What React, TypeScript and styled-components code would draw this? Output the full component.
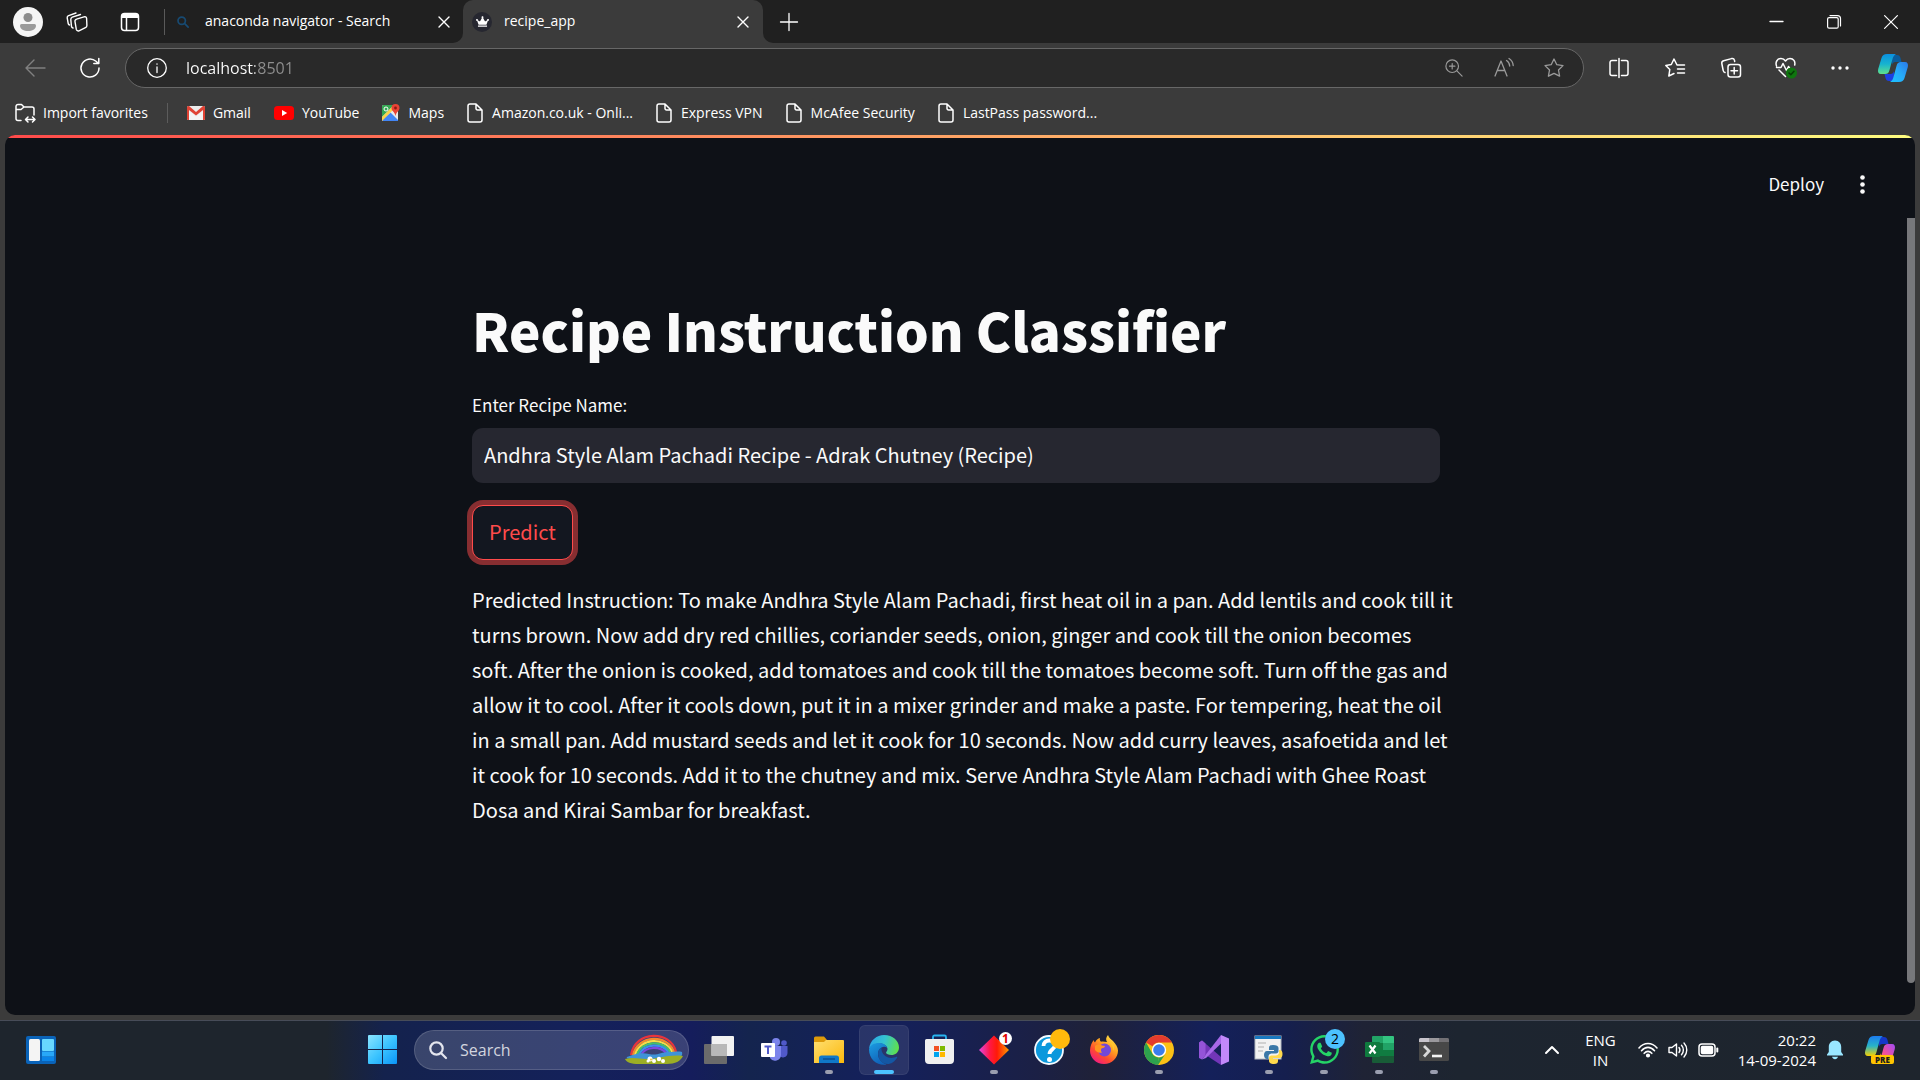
import React from "react";
import styled, { createGlobalStyle } from "styled-components";
import { FaWhatsapp, FaCrown } from "react-icons/fa";

const uiFont = `"Open Sans", "Noto Sans", sans-serif`;
const appFont = `"Noto Sans CJK JP", "Noto Sans", sans-serif`;

const GlobalStyle = createGlobalStyle`
  * { box-sizing: border-box; }
  body { margin: 0; background: #3b3b3b; }
  button, input { font: inherit; color: inherit; border: 0; background: none; padding: 0; margin: 0; outline: none; }
`;

const Screen = styled.div`
  display: flex;
  flex-direction: column;
  min-height: 100vh;
  background: #3b3b3b;
  color: #fff;
  font-family: ${uiFont};
  font-size: 14px;
  line-height: 20px;
`;

const Svg = styled.svg`
  display: block;
  flex: none;
  overflow: visible;
`;

/* Tab strip */

const TabStrip = styled.header`
  display: flex;
  height: 43px;
`;

const StripStart = styled.div`
  display: flex;
  align-items: center;
  width: 463px;
  padding: 0 10px 0 12px;
  background: #202020;
  border-bottom-right-radius: 10px;
`;

const StripEnd = styled.div`
  display: flex;
  flex: 1;
  align-items: center;
  justify-content: space-between;
  background: #202020;
  border-bottom-left-radius: 10px;
`;

const IconButton = styled.button<{ $w?: number }>`
  display: flex;
  flex: none;
  align-items: center;
  justify-content: center;
  width: ${(p) => p.$w ?? 32}px;
  height: 34px;
`;

const StripDivider = styled.span`
  width: 1px;
  height: 26px;
  margin: 0 8px 0 14px;
  background: #5a5a5a;
`;

const Tab = styled.div`
  display: flex;
  flex: 1;
  align-items: center;
  gap: 12px;
`;

const TabTitle = styled.span`
  flex: 1;
  padding-bottom: 2px;
  white-space: nowrap;
`;

const ActiveTabSlot = styled.div`
  width: 300px;
  background: #202020;
`;

const ActiveTab = styled(Tab)`
  height: 100%;
  padding: 0 4px 0 9px;
  background: #3b3b3b;
  border-radius: 10px 10px 0 0;
`;

const Favicon = styled.span<{ $dark?: boolean }>`
  display: flex;
  align-items: center;
  justify-content: center;
  width: 20px;
  height: 20px;
  border-radius: 50%;
  background: ${(p) => (p.$dark ? "#262730" : "transparent")};
`;

const WindowControls = styled.div`
  display: flex;
  padding-right: 1px;
`;

/* Toolbar */

const Toolbar = styled.div`
  display: flex;
  align-items: center;
  height: 49px;
  padding: 0 0 0 7px;
`;

const AddressBar = styled.div`
  display: flex;
  flex: 1;
  align-items: center;
  height: 40px;
  margin: 0 7px 0 7px;
  padding: 0 4px 0 21px;
  color: #9a9a9a;
  background: #292929;
  border: 1px solid #676767;
  border-radius: 20px;
`;

const AddressInput = styled.input`
  flex: 1;
  min-width: 0;
  margin-left: 19px;
  font-size: 16px;
  line-height: 24px;
  color: #fff;
  background: linear-gradient(90deg, #fff 69px, #8f8f8f 69px);
  background-clip: text;
  -webkit-background-clip: text;
  -webkit-text-fill-color: transparent;
`;

/* Favourites bar */

const Favourites = styled.nav`
  display: flex;
  align-items: center;
  height: 43px;
  padding: 0 15px 2px;
  gap: 23px;
`;

const FavLink = styled.a`
  display: flex;
  align-items: center;
  gap: 8px;
  color: #fff;
  text-decoration: none;
  white-space: nowrap;
`;

const FavDivider = styled.span`
  width: 1px;
  height: 20px;
  margin: 0 -4px;
  background: #5c5c5c;
`;

/* Page */

const PageFrame = styled.main`
  display: flex;
  flex: 1;
  flex-direction: column;
  margin: 0 5px 5px;
  overflow: hidden;
  background: #0e1117;
  border-radius: 10px;
  color: #fafafa;
  font-family: ${appFont};
`;

const Decoration = styled.div`
  height: 3px;
  background: linear-gradient(90deg, #ff4b4b, #fffd80);
`;

const AppHeader = styled.div`
  display: flex;
  align-items: center;
  justify-content: flex-end;
  gap: 16px;
  height: 80px;
  padding: 12px 31px 0 0;
`;

const DeployButton = styled.button`
  font-size: 17px;
  line-height: 24px;
`;

const ScrollRegion = styled.div`
  display: flex;
  flex: 1;
`;

const Content = styled.div`
  flex: 1;
  padding: 69px 0 32px;
`;

const Block = styled.div`
  width: 968px;
  max-width: 100%;
  margin: 0 auto;
`;

const Track = styled.div`
  width: 8px;
  margin-bottom: 32px;
  background: #77787b;
  border-radius: 0 0 4px 4px;
`;

const Heading = styled.h1`
  margin: 0;
  font-size: 53px;
  font-weight: 900;
  line-height: 84px;
  white-space: nowrap;
`;

const FieldLabel = styled.label`
  display: block;
  margin: 22px 0 11px;
  font-size: 17px;
  line-height: 24px;
`;

const RecipeInput = styled.input`
  display: block;
  width: 100%;
  height: 55px;
  padding: 0 12px 2px;
  font-size: 20px;
  line-height: 32px;
  background: #262730;
  border-radius: 11px;
`;

const PredictButton = styled.button`
  height: 55px;
  margin: 22px 0;
  padding: 0 16px 2px;
  font-size: 20px;
  line-height: 32px;
  color: #ff4b4b;
  background: #131720;
  border: 1px solid #ff4b4b;
  border-radius: 11px;
  box-shadow: 0 0 0 5px rgba(255, 75, 75, 0.5);
`;

const Prediction = styled.p`
  margin: 0;
  font-size: 20px;
  line-height: 35px;
  white-space: nowrap;
`;

/* Taskbar */

const Taskbar = styled.footer`
  display: flex;
  align-items: center;
  height: 60px;
  padding: 0 3px 2px 16px;
  border-top: 1px solid #474c58;
  background: linear-gradient(
    90deg,
    #1e252d 0%,
    #1e252d 17%,
    #14224d 20%,
    #14215a 30%,
    #151d5c 36%,
    #14244e 39%,
    #14205c 46%,
    #1b2045 54%,
    #1f2138 57%,
    #14205a 63%,
    #151f4e 67%,
    #1f2335 71%,
    #1d2530 76%,
    #1e252d 100%
  );
`;

const TaskGroup = styled.div`
  display: flex;
  align-items: center;
  gap: 5px;
  margin-left: 291px;
`;

const TaskButton = styled.button<{ $active?: boolean }>`
  position: relative;
  display: flex;
  align-items: center;
  justify-content: center;
  width: 50px;
  height: 50px;
  border-radius: 6px;
  background: ${(p) => (p.$active ? "rgba(255,255,255,0.09)" : "none")};
  box-shadow: ${(p) => (p.$active ? "inset 0 0 0 1px rgba(255,255,255,0.06)" : "none")};
`;

const Indicator = styled.span<{ $active?: boolean }>`
  position: absolute;
  bottom: 1px;
  left: 50%;
  width: ${(p) => (p.$active ? 20 : 8)}px;
  height: 4px;
  transform: translateX(-50%);
  background: ${(p) => (p.$active ? "#4cc2ff" : "#9a9eaf")};
  border-radius: 2px;
`;

const Badge = styled.span<{ $bg: string; $fg: string; $size: number }>`
  position: absolute;
  top: ${(p) => (p.$size > 16 ? 4 : 7)}px;
  right: ${(p) => (p.$size > 16 ? 4 : 7)}px;
  width: ${(p) => p.$size}px;
  height: ${(p) => p.$size}px;
  font-size: ${(p) => (p.$size > 16 ? 14 : 12)}px;
  font-weight: ${(p) => (p.$size > 16 ? 400 : 700)};
  line-height: ${(p) => p.$size}px;
  text-align: center;
  color: ${(p) => p.$fg};
  background: ${(p) => p.$bg};
  border-radius: 50%;
`;

const TaskSearch = styled.label`
  display: flex;
  align-items: center;
  width: 275px;
  height: 40px;
  margin: 0 0 0 2px;
  padding: 0 5px 0 14px;
  gap: 13px;
  background: rgba(255, 255, 255, 0.16);
  border: 1px solid rgba(255, 255, 255, 0.14);
  border-radius: 20px;
`;

const TaskSearchInput = styled.input`
  flex: 1;
  min-width: 0;
  font-size: 16px;
  line-height: 24px;
  &::placeholder { color: #d2d5df; opacity: 1; }
`;

const Tray = styled.div`
  display: flex;
  align-items: center;
  margin-left: auto;
`;

const TrayText = styled.button<{ $align: string; $gap: number }>`
  margin-right: ${(p) => p.$gap}px;
  text-align: ${(p) => p.$align};
  font-size: 15px;
  line-height: 20px;
`;

const TrayIcons = styled.button`
  display: flex;
  align-items: center;
  gap: 10px;
  margin-right: 20px;
`;

/* Drawings */

type LineProps = { w?: number; h?: number; vb?: string; c?: string; sw?: number; children: React.ReactNode };

const Line = ({ w = 20, h = 20, vb = "0 0 20 20", c = "currentColor", sw = 1.3, children }: LineProps) => (
  <Svg width={w} height={h} viewBox={vb} fill="none" stroke={c} strokeWidth={sw} strokeLinecap="round" strokeLinejoin="round" aria-hidden="true">
    {children}
  </Svg>
);

const Art = ({ w = 30, h = 30, vb = "0 0 30 30", children }: LineProps) => (
  <Svg width={w} height={h} viewBox={vb} aria-hidden="true">
    {children}
  </Svg>
);

const CloseGlyph = () => (
  <Line w={12} h={12} vb="0 0 12 12" sw={1.4}><path d="M1 1l10 10M11 1L1 11" /></Line>
);

const PageGlyph = () => (
  <Line w={17} h={20} vb="0 0 17 20" sw={1.5}>
    <path d="M3 1h6l6 6v10a2 2 0 0 1-2 2H3a2 2 0 0 1-2-2V3a2 2 0 0 1 2-2zM9 1v4.500a1.500 1.500 0 0 0 1.500 1.500H15" />
  </Line>
);

const Profile = () => (
  <Svg width={30} height={30} viewBox="0 0 30 30" aria-hidden="true">
    <circle cx="15" cy="15" r="15" fill="#f5f5f5" />
    <circle cx="15" cy="10.500" r="4.500" fill="#8c8c8c" />
    <path d="M8.500 17h13a1.500 1.500 0 0 1 1.500 1.500c0 4-4 5.500-8 5.500s-8-1.500-8-5.500A1.500 1.500 0 0 1 8.500 17z" fill="#9a9a9a" />
  </Svg>
);

const Workspaces = () => (
  <Line w={22} h={20} vb="0 0 22 20" sw={1.4}>
    <path d="M10.500 7.200l7.500-2.400a2 2 0 0 1 2.600 1.500l.3 7.200a2.400 2.400 0 0 1-1.500 2.200l-6.400 3.100a2 2 0 0 1-2.700-1.400L9 9.600a2 2 0 0 1 1.500-2.400z" />
    <path d="M7 16a2 2 0 0 1-1.500-1.500L4.800 7.500a2.400 2.400 0 0 1 1.500-2.300L14.500 2.500M3.500 13a2 2 0 0 1-1.300-1.500L1.200 5.800a2.200 2.200 0 0 1 1.400-2.200L10 1" />
  </Line>
);

const TabActions = () => (
  <Svg width={20} height={20} viewBox="0 0 20 20" fill="none" stroke="#fff" strokeWidth="1.500" aria-hidden="true">
    <rect x="1.500" y="1.500" width="17" height="17" rx="3" /><path d="M6.500 5v13" /><path d="M2 4h16" strokeWidth="4" />
  </Svg>
);

const CopilotMark = ({ pre }: { pre?: boolean }) => (
  <Art w={30} h={28} vb="0 0 30 28">
    <defs>
      <linearGradient id={pre ? "cpA" : "cqA"} x1="0" y1="0" x2="0" y2="1">
        <stop offset="0" stopColor={pre ? "#1c7cf0" : "#0b90e0"} /><stop offset=".5" stopColor={pre ? "#28b4c8" : "#17b3cf"} /><stop offset="1" stopColor={pre ? "#f5d000" : "#5fe08c"} />
      </linearGradient>
      <linearGradient id={pre ? "cpB" : "cqB"} x1="0" y1="1" x2="1" y2="0">
        <stop offset="0" stopColor={pre ? "#ff7a3c" : "#1cc4ff"} /><stop offset=".5" stopColor={pre ? "#f0509c" : "#27aaf8"} /><stop offset="1" stopColor={pre ? "#a04cf8" : "#2a78e8"} />
      </linearGradient>
    </defs>
    <path d="M13 1h6c2 0 3 1 3.500 3l1 4h-6c-2 0-3 1-3.500 3z" fill={pre ? "#1538c8" : "#0a5c9c"} />
    <path d="M17 27h-6c-2 0-3-1-3.500-3l-1-4h6c2 0 3-1 3.500-3z" fill={pre ? "#f08020" : "#1d40e0"} />
    <path d="M9 0h9c-2 1-3 3-3.500 5l-3 11c-.8 3-2 4-4.500 4H3c-2.500 0-3.500-2-2.800-5L3.500 4C4.300 1.300 6 0 9 0z" fill={`url(#${pre ? "cpA" : "cqA"})`} />
    <path d="M21 28h-9c2-1 3-3 3.500-5l3-11c.8-3 2-4 4.500-4h4c2.500 0 3.500 2 2.800 5L26.500 24c-.8 2.700-2.500 4-5.500 4z" fill={`url(#${pre ? "cpB" : "cqB"})`} />
    {pre && (
      <>
        <rect x="6" y="19" width="23" height="9" rx="2" fill="#ffc400" />
        <text x="17.500" y="26.500" fontFamily="Open Sans, sans-serif" fontSize="8" fontWeight="800" textAnchor="middle" fill="#1c1c1c">PRE</text>
      </>
    )}
  </Art>
);

const Gmail = () => (
  <Art w={18} h={14} vb="0 0 18 14">
    <rect width="18" height="14" rx="1.500" fill="#ececec" />
    <path d="M2 14V5l7 5.500L16 5v9z" fill="#f4f4f4" />
    <path d="M0 1.500C0 .6.7 0 1.500 0H2l7 6 7-6h.5c.8 0 1.500.6 1.500 1.500V13a1 1 0 0 1-1 1h-1V4L9 9.500 2 4v10H1a1 1 0 0 1-1-1z" fill="#e04335" />
  </Art>
);

const YouTube = () => (
  <Art w={20} h={14} vb="0 0 20 14">
    <rect width="20" height="14" rx="3.500" fill="#f00" /><path d="M8 4l5.200 3L8 10z" fill="#fff" />
  </Art>
);

const Maps = () => (
  <Art w={18} h={18} vb="0 0 18 18">
    <rect y="1" width="16" height="16" rx="1.500" fill="#e9e9e9" />
    <path d="M1.500 1H12L0 13V2.500A1.500 1.500 0 0 1 1.500 1z" fill="#34a853" />
    <path d="M8.500 8.500L16 16v1H1l-1-1z" fill="#4285f4" />
    <path d="M0 13L11 2l2 2L0 17z" fill="#fbd24a" />
    <circle cx="4" cy="5" r="2" fill="none" stroke="#fff" strokeWidth="1" />
    <path d="M13.500 0A4 4 0 0 1 17.500 4c0 3-3.200 3.500-4 8-.8-4.500-4-5-4-8a4 4 0 0 1 4-4z" fill="#ea4335" />
    <circle cx="13.500" cy="4" r="1.400" fill="#8c1a12" />
  </Art>
);

const WidgetsArt = () => (
  <Art w={30} h={28} vb="0 0 30 28">
    <rect width="30" height="28" rx="2" fill="#0a63b8" /><rect x="3" y="3" width="11" height="22" rx="1.500" fill="#f4f4f4" />
    <rect x="16" y="3" width="12" height="12" rx="1" fill="#68d8ff" /><rect x="16" y="15.500" width="12" height="5" fill="#28a8f8" /><rect x="16" y="21" width="12" height="4" fill="#0a84e8" />
  </Art>
);

const StartArt = () => (
  <Art w={29} h={29} vb="0 0 29 29">
    <defs><linearGradient id="win" x1="0" y1="0" x2="1" y2="1"><stop offset="0" stopColor="#8be4ff" /><stop offset=".5" stopColor="#3cc4ff" /><stop offset="1" stopColor="#0a94f8" /></linearGradient></defs>
    <path d="M0 1a1 1 0 0 1 1-1h13v14H0zM15 0h13a1 1 0 0 1 1 1v13H15zM0 15h14v14H1a1 1 0 0 1-1-1zM15 15h14v13a1 1 0 0 1-1 1H15z" fill="url(#win)" />
  </Art>
);

const Rainbow = () => (
  <Art w={58} h={30} vb="0 0 58 30">
    <g fill="none" strokeWidth="2.200">
      <path d="M6 20C10 -5 46 -5 51 17" stroke="#e8343c" /><path d="M8 20C13 -1 43 -1 49 17" stroke="#f58a2c" />
      <path d="M10 20C15 2 41 2 47 17" stroke="#f8dc48" /><path d="M12 20C17 5 39 5 45 17" stroke="#45bf6c" />
      <path d="M14 20C19 8 37 8 43 17" stroke="#3c8ff0" /><path d="M16 20C21 11 35 11 41 18" stroke="#7c48e0" />
    </g>
    <path d="M2 22c8-3 14-5 22-3 8 2 12-2 20-2 6 0 9-1 13 0 1 4-2 6-6 7H6c-3 0-5-1-4-2z" fill="#3f93d8" />
    <path d="M0 24c8-2 14 0 22 0 12 0 22-5 36-3-2 5-8 8-16 8H14C6 29 1 27 0 24z" fill="#9cae24" />
    <g fill="#fff"><circle cx="25" cy="24" r="2.500" /><circle cx="29" cy="26" r="2" /><circle cx="34" cy="24" r="2.200" /><circle cx="38" cy="26" r="2" /><circle cx="23" cy="26" r="1.500" /></g>
    <circle cx="26" cy="24.500" r="1" fill="#f5c02c" />
  </Art>
);

const TaskViewArt = () => (
  <Art w={30} h={28} vb="0 0 30 28">
    <rect y="8" width="23" height="20" rx="1" fill="#6b6b6b" /><rect x="7.500" width="22.500" height="20" rx="1" fill="#f2f2f2" /><path d="M7.500 8H23v12H7.500z" fill="#b8b8b8" />
  </Art>
);

const TeamsArt = () => (
  <Art w={27} h={24} vb="0 0 27 24">
    <circle cx="23" cy="5" r="2.800" fill="#5059c9" /><path d="M18 8h8.500v7a4.500 4.500 0 0 1-8.500 2z" fill="#5059c9" />
    <circle cx="15" cy="4" r="4" fill="#7b83eb" /><path d="M9 8h11v9a6 6 0 0 1-11 3z" fill="#7b83eb" />
    <rect y="5" width="14" height="14" rx="1" fill="#fff" /><path d="M3.500 8.500h7M7 8.500V16" stroke="#5059c9" strokeWidth="2" fill="none" />
  </Art>
);

const ExplorerArt = () => (
  <Art w={30} h={27} vb="0 0 30 27">
    <defs><linearGradient id="fold" x1="0" y1="0" x2="1" y2="1"><stop offset="0" stopColor="#ffdf70" /><stop offset="1" stopColor="#fbb80c" /></linearGradient></defs>
    <path d="M0 2a1.500 1.500 0 0 1 1.500-1.500H10L13 4l-2 3H0z" fill="#dd9a0a" /><path d="M12 4h17a1 1 0 0 1 1 1v22H0V6h10z" fill="url(#fold)" />
    <path d="M5 27v-5a2.500 2.500 0 0 1 2.500-2.500h15A2.500 2.500 0 0 1 25 22v5z" fill="#1078c8" /><path d="M9 23h12" stroke="#084f94" strokeWidth="1.500" />
  </Art>
);

const EdgeArt = () => (
  <Art>
    <defs>
      <linearGradient id="edT" x1="0" y1=".3" x2="1" y2=".5"><stop offset="0" stopColor="#2aa5e8" /><stop offset=".5" stopColor="#35c4d0" /><stop offset="1" stopColor="#5fe04c" /></linearGradient>
      <linearGradient id="edB" x1="0" y1="0" x2=".5" y2="1"><stop offset="0" stopColor="#1b9de2" /><stop offset="1" stopColor="#1062b8" /></linearGradient>
    </defs>
    <path d="M0 14C1 5 8 0 15 0c9 0 15 6 15 12.500 0 5-4 7.500-7.500 7.500-3 0-5.500-1-5.500-2.200C17 17 18.500 16 18.500 14 18.500 11 15 8.500 11 8.500 5 8.500 1 12 0 14z" fill="url(#edT)" />
    <path d="M0 14.500C1 10 5 8 10 8c5 0 8.500 3 8.500 6 0-2-3.500-3-6-1.500-2.500 1.300-3.500 4-3.500 6.500 0 5 4 9 8.500 10.500C9 31 0 25 0 14.500z" fill="url(#edB)" />
    <path d="M12.500 12.500C8 15 8.500 21 11 25c3 4.500 9 5 12.500 2.500 2-1.300 4-3.500 4.700-5 .3-.6-.2-1-.8-.7-3 1.500-8 1.700-11.200-.8C13 18.500 12 15 12.500 12.500z" fill="#1457a4" />
  </Art>
);

const StoreArt = () => (
  <Art w={29} h={29} vb="0 0 29 29">
    <path d="M8 5V2a1.500 1.500 0 0 1 1.500-1.500h10A1.500 1.500 0 0 1 21 2v3" fill="none" stroke="#28b4f0" strokeWidth="1.800" />
    <path d="M0 5.500A1.500 1.500 0 0 1 1.500 4h26A1.500 1.500 0 0 1 29 5.500V25a4 4 0 0 1-4 4H4a4 4 0 0 1-4-4z" fill="#f0f0f0" />
    <path d="M9 11h5v5H9z" fill="#f25022" /><path d="M15 11h5v5h-5z" fill="#7fba00" /><path d="M9 17h5v5H9z" fill="#00a4ef" /><path d="M15 17h5v5h-5z" fill="#ffb900" />
  </Art>
);

const DiamondArt = () => (
  <Art>
    <defs><linearGradient id="dia"><stop offset="0" stopColor="#e048e0" /><stop offset=".35" stopColor="#ff1848" /><stop offset=".6" stopColor="#ff1a08" /><stop offset="1" stopColor="#ff9c00" /></linearGradient></defs>
    <path d="M15 0.500L30 15 15 29.500 0 15z" fill="url(#dia)" />
  </Art>
);

const HelpArt = () => (
  <Art>
    <circle cx="15" cy="15" r="14" fill="#0c98dc" stroke="#f4faff" strokeWidth="1.800" />
    <path d="M9.500 11c0-3.500 2.500-5.500 5.800-5.500 3.500 0 5.700 2 5.700 4.800 0 4-5.500 4-5.500 8.700" fill="none" stroke="#fff" strokeWidth="3.800" /><circle cx="15.500" cy="24.500" r="2.500" fill="#fff" />
  </Art>
);

const FirefoxArt = () => (
  <Art w={28} h={29} vb="0 0 28 29">
    <defs>
      <linearGradient id="ffx" x1=".9" y1="0" x2=".2" y2="1"><stop offset="0" stopColor="#fff050" /><stop offset=".4" stopColor="#ffa020" /><stop offset=".7" stopColor="#ff4a30" /><stop offset="1" stopColor="#f0148c" /></linearGradient>
    </defs>
    <path d="M18 0c1 3 3 4 5 6 2.500 2.800 5 6 5 9.500C28 23 22 29 14 29S0 23 0 15.500C0 11 2 7 4 5c0 1.500.4 2 1 2.500C6 5 8 3.500 10 3c-.5 1.500 0 3 1 3.800C13 6 15 7 17 7 15.500 5 16 2 18 0z" fill="url(#ffx)" />
    <circle cx="14.500" cy="15" r="6.500" fill="#7348d8" />
    <path d="M5 11c2-2 5-2 7-.5l3 .5c0 1.500-2 2-3.500 2.500-1 1.500-.5 3 .5 4-3 1-5.500-.5-7-2.500z" fill="#ff9420" />
    <path d="M18 7c4 2 5.500 5 5 9 1.500-2 1.500-6 0-8.500z" fill="#ffc42c" />
  </Art>
);

const ChromeArt = () => (
  <Art>
    <circle cx="15" cy="15" r="15" fill="#fbc116" />
    <path d="M2 7.500A15 15 0 0 1 28 7.500H15a7.500 7.500 0 0 0-6.500 3.700z" fill="#e33b2e" />
    <path d="M2 7.500L8.500 18.700a7.500 7.500 0 0 0 6.500 3.800L13.500 30A15 15 0 0 1 2 7.500z" fill="#2da14e" /><path d="M15 22.500a7.500 7.500 0 0 0 6.500-3.700L14 30h-1z" fill="#2da14e" />
    <circle cx="15" cy="15" r="7.200" fill="#fff" /><circle cx="15" cy="15" r="5.800" fill="#3b7ded" />
  </Art>
);

const StudioArt = () => (
  <Art>
    <path d="M0 7.500L3 5.500 22 22v8L3 17.500z" fill="#7236b8" /><path d="M0 7.500L3 5.500l3.500 3V20L3 24.500 0 23z" fill="#9454d8" />
    <path d="M3 24.500L22 0v8.500L7 23z" fill="#a768e8" /><path d="M22 0l8 3.500v23L22 30z" fill="#c288fa" />
  </Art>
);

const PythonArt = () => (
  <Art w={28} h={28} vb="0 0 28 28">
    <rect width="26" height="23" fill="#f2f2f2" stroke="#b4bac0" /><path d="M0 0h26v3H0z" fill="#1878c0" /><path d="M3 7h8M3 11h6M3 15h5" stroke="#b0b0b0" strokeWidth="1.200" />
    <path d="M18 9c-3 0-4 1-4 3v2h5v1h-7c-2 0-3 2-3 4s1 4 3 4h1.500v-2.500c0-2 1.500-3 3.500-3h4c1.500 0 2.500-1 2.500-2.500V12c0-2-2-3-5.500-3z" fill="#3a78a8" />
    <path d="M19 28c3 0 4-1 4-3v-2h-5v-1h6.500c2 0 3-1.500 3-4s-1-4-3-4H24v2.500c0 2-1.500 3-3.500 3h-4c-1.500 0-2.500 1-2.500 2.500V25c0 2 2 3 5 3z" fill="#ffd94c" />
  </Art>
);

const ExcelArt = () => (
  <Art w={29} h={27} vb="0 0 29 27">
    <path d="M7 1a1 1 0 0 1 1-1h10v7H7z" fill="#21a366" /><path d="M18 0h10a1 1 0 0 1 1 1v6H18z" fill="#33c481" /><path d="M7 7h11v7H7z" fill="#107c41" /><path d="M18 7h11v7H18z" fill="#21a366" />
    <path d="M7 14h22v6H7z" fill="#107c41" /><path d="M7 20h22v6a1 1 0 0 1-1 1H8a1 1 0 0 1-1-1z" fill="#185c37" />
    <rect y="6" width="15" height="15" rx="1" fill="#0f7a3e" /><path d="M4.500 9.500l6 8M10.500 9.500l-6 8" stroke="#fff" strokeWidth="2.200" />
  </Art>
);

const TerminalArt = () => (
  <Art w={30} h={23} vb="0 0 30 23">
    <rect width="30" height="23" rx="1.500" fill="#484848" /><path d="M0 4V1.500A1.500 1.500 0 0 1 1.500 0H10v4z" fill="#c8c4cc" /><path d="M10 0h10v4H10z" fill="#9a989c" /><path d="M20 0h8.500A1.500 1.500 0 0 1 30 1.500V4H20z" fill="#727074" />
    <path d="M5 8l5 5-5 5.500" fill="none" stroke="#d8d8d8" strokeWidth="2.800" /><path d="M13 18h10" stroke="#f4f4f4" strokeWidth="2.600" />
  </Art>
);

const tasks = [
  { name: "Task view", art: <TaskViewArt /> },
  { name: "Teams", art: <TeamsArt /> },
  { name: "File Explorer", art: <ExplorerArt />, open: true },
  { name: "Microsoft Edge", art: <EdgeArt />, open: true, active: true },
  { name: "Microsoft Store", art: <StoreArt /> },
  { name: "Updates", art: <DiamondArt />, open: true, badge: { text: "1", bg: "#fff", fg: "#e00000", size: 13 } },
  { name: "Help", art: <HelpArt />, badge: { text: "", bg: "#ffb90c", fg: "#000", size: 20 } },
  { name: "Firefox", art: <FirefoxArt /> },
  { name: "Chrome", art: <ChromeArt />, open: true },
  { name: "Visual Studio", art: <StudioArt /> },
  { name: "Python", art: <PythonArt />, open: true },
  { name: "WhatsApp", art: <FaWhatsapp size={33} color="#25d366" />, open: true, badge: { text: "2", bg: "#4cc2ff", fg: "#000", size: 20 } },
  { name: "Excel", art: <ExcelArt />, open: true },
  { name: "Terminal", art: <TerminalArt />, open: true },
];

const predictionLines = [
  "Predicted Instruction: To make Andhra Style Alam Pachadi, first heat oil in a pan. Add lentils and cook till it",
  "turns brown. Now add dry red chillies, coriander seeds, onion, ginger and cook till the onion becomes",
  "soft. After the onion is cooked, add tomatoes and cook till the tomatoes become soft. Turn off the gas and",
  "allow it to cool. After it cools down, put it in a mixer grinder and make a paste. For tempering, heat the oil",
  "in a small pan. Add mustard seeds and let it cook for 10 seconds. Now add curry leaves, asafoetida and let",
  "it cook for 10 seconds. Add it to the chutney and mix. Serve Andhra Style Alam Pachadi with Ghee Roast",
  "Dosa and Kirai Sambar for breakfast.",
];

export default function App() {
  return (
    <Screen>
      <GlobalStyle />
      <TabStrip>
        <StripStart>
          <IconButton aria-label="Profile"><Profile /></IconButton>
          <IconButton $w={66} aria-label="Workspaces"><Workspaces /></IconButton>
          <IconButton $w={40} aria-label="Tab actions"><TabActions /></IconButton>
          <StripDivider />
          <Tab>
            <Favicon>
              <Line w={12} h={12} vb="0 0 14 14" c="#174a72" sw={2}><circle cx="5.500" cy="5.500" r="4.300" /><path d="M9 9l4 4" /></Line>
            </Favicon>
            <TabTitle>anaconda navigator - Search</TabTitle>
            <IconButton $w={18} aria-label="Close tab"><CloseGlyph /></IconButton>
          </Tab>
        </StripStart>
        <ActiveTabSlot>
          <ActiveTab>
            <Favicon $dark><FaCrown size={13} color="#fff" /></Favicon>
            <TabTitle>recipe_app</TabTitle>
            <IconButton aria-label="Close tab"><CloseGlyph /></IconButton>
          </ActiveTab>
        </ActiveTabSlot>
        <StripEnd>
          <IconButton $w={52} aria-label="New tab"><Line w={18} h={18} vb="0 0 18 18"><path d="M9 0.500v17M.5 9h17" /></Line></IconButton>
          <WindowControls>
            <IconButton $w={57} aria-label="Minimize"><Line w={13} h={13} vb="0 0 13 13"><path d="M0 6.500h13" /></Line></IconButton>
            <IconButton $w={57} aria-label="Restore"><Line w={14} h={14} vb="0 0 14 14" sw={1.2}><rect x=".6" y="2.600" width="10.600" height="10.600" rx="1.500" /><path d="M3 .6h7.500a3 3 0 0 1 3 3V11" /></Line></IconButton>
            <IconButton $w={57} aria-label="Close window"><Line w={14} h={14} vb="0 0 14 14" sw={1.2}><path d="M.6.6l12.800 12.800M13.400.6L.6 13.400" /></Line></IconButton>
          </WindowControls>
        </StripEnd>
      </TabStrip>

      <Toolbar>
        <IconButton $w={55} aria-label="Back"><Line c="#808080" sw={1.4}><path d="M20 10H1M9 2L1 10l8 8" /></Line></IconButton>
        <IconButton $w={56} aria-label="Refresh"><Line sw={1.5}><path d="M19 10a9 9 0 1 1-3-6.700L18.500 5.500M18.800 0.500v5h-5" /></Line></IconButton>
        <AddressBar>
          <Line c="#fff" sw={1.3}><circle cx="10" cy="10" r="9.300" /><path d="M10 9v5.500M10 5.800v.4" /></Line>
          <AddressInput aria-label="Address" defaultValue="localhost:8501" />
          <IconButton $w={50} aria-label="Zoom"><Line w={18} h={18}><circle cx="8" cy="8" r="7" /><path d="M13.500 13.500L19 19M8 5v6M5 8h6" /></Line></IconButton>
          <IconButton $w={50} aria-label="Read aloud"><Line><path d="M1 18L7 3l6 15M3.200 12.500h7.600M12.500 2.500c2 1.200 3 3 3.200 5.500M15 .5c2.500 1.700 4 4 4.200 7" /></Line></IconButton>
          <IconButton $w={50} aria-label="Add to favorites"><Line><path d="M10 1l2.800 5.700 6.200.9-4.500 4.400 1.100 6.200L10 15.300l-5.600 2.900 1.100-6.200L1 7.600l6.200-.9z" /></Line></IconButton>
        </AddressBar>
        <IconButton $w={56} aria-label="Split screen"><Line sw={1.5}><path d="M7.500 2.500H3a2 2 0 0 0-2 2v11a2 2 0 0 0 2 2h4.500M12.500 2.500H17a2 2 0 0 1 2 2v11a2 2 0 0 1-2 2h-4.500M10 .5v19" /></Line></IconButton>
        <IconButton $w={56} aria-label="Favorites"><Line sw={1.5}><path d="M12 7L9 1 6.300 6.500l-5.500.9 4 4.100-1 6.500L9 15.500M12 7h7.500M12.500 11h7M12.500 15h7" /></Line></IconButton>
        <IconButton $w={55} aria-label="Collections"><Line sw={1.5}><rect x="7" y="6.500" width="12.500" height="12.500" rx="2.500" /><path d="M13.200 9.500v6.500M10 12.700h6.500M4 14.500a2.500 2.500 0 0 1-1.800-2L.8 5.500A2.500 2.500 0 0 1 2.600 2.700L10.500.6a2.500 2.500 0 0 1 3 1.800l.2 1.100" /></Line></IconButton>
        <IconButton $w={56} aria-label="Browser essentials">
          <Line w={22} h={22} vb="0 0 22 22" sw={1.5}>
            <path d="M1.500 9C0 5 2.500 1.500 6 1.500c2 0 3.500 1 4.500 2.500C11.500 2.500 13 1.500 15 1.500c3.500 0 5.500 3 4.700 6.500M1.500 10.500H6l2-4 3.500 7 2-4 1 1.500M4 13l6.500 6.500" />
            <circle cx="16.500" cy="16" r="5.500" fill="#0e760e" stroke="none" /><path d="M14 16l1.800 1.800 3.200-3.500" stroke="#063c06" />
          </Line>
        </IconButton>
        <IconButton $w={52} aria-label="Settings and more"><Line w={18} h={4} vb="0 0 18 4"><g fill="#fff" stroke="none"><circle cx="2" cy="2" r="1.700" /><circle cx="9" cy="2" r="1.700" /><circle cx="16" cy="2" r="1.700" /></g></Line></IconButton>
        <IconButton $w={54} aria-label="Copilot"><CopilotMark /></IconButton>
      </Toolbar>

      <Favourites>
        <FavLink href="#">
          <Line sw={1.5}><path d="M6 17.500H3a2 2 0 0 1-2-2V3.500a2 2 0 0 1 2-2h3.500L9 4h8a2 2 0 0 1 2 2v6M1 6.500h5L9 4M11 16.500h8.500M13 14l-2.500 2.500L13 19M17.500 14l2.500 2.500-2.500 2.500" /></Line>
          Import favorites
        </FavLink>
        <FavDivider />
        <FavLink href="#"><Gmail />Gmail</FavLink>
        <FavLink href="#"><YouTube />YouTube</FavLink>
        <FavLink href="#"><Maps />Maps</FavLink>
        {["Amazon.co.uk - Onli...", "Express VPN", "McAfee Security", "LastPass password..."].map((t) => (
          <FavLink href="#" key={t}><PageGlyph />{t}</FavLink>
        ))}
      </Favourites>

      <PageFrame>
        <Decoration />
        <AppHeader>
          <DeployButton>Deploy</DeployButton>
          <IconButton $w={44} aria-label="Main menu">
            <Svg width={5} height={19} viewBox="0 0 5 19" fill="#fafafa" aria-hidden="true"><circle cx="2.500" cy="2.500" r="2.300" /><circle cx="2.500" cy="9.500" r="2.300" /><circle cx="2.500" cy="16.500" r="2.300" /></Svg>
          </IconButton>
        </AppHeader>
        <ScrollRegion>
          <Content>
            <Block>
              <Heading>Recipe Instruction Classifier</Heading>
              <FieldLabel htmlFor="recipe">Enter Recipe Name:</FieldLabel>
              <RecipeInput id="recipe" defaultValue="Andhra Style Alam Pachadi Recipe - Adrak Chutney (Recipe)" />
              <PredictButton>Predict</PredictButton>
              <Prediction>
                {predictionLines.map((line) => (
                  <React.Fragment key={line}>{line}<br /></React.Fragment>
                ))}
              </Prediction>
            </Block>
          </Content>
          <Track />
        </ScrollRegion>
      </PageFrame>

      <Taskbar>
        <TaskButton aria-label="Widgets"><WidgetsArt /></TaskButton>
        <TaskGroup>
          <TaskButton aria-label="Start"><StartArt /></TaskButton>
          <TaskSearch>
            <Line w={18} h={18} vb="0 0 18 18" c="#e4e6ee" sw={2.2}><circle cx="7.500" cy="7.500" r="6.200" /><path d="M12 12l5 5" /></Line>
            <TaskSearchInput placeholder="Search" aria-label="Search" />
            <Rainbow />
          </TaskSearch>
          {tasks.map((t) => (
            <TaskButton key={t.name} aria-label={t.name} $active={t.active}>
              {t.art}
              {t.open && <Indicator $active={t.active} />}
              {t.badge && <Badge $bg={t.badge.bg} $fg={t.badge.fg} $size={t.badge.size}>{t.badge.text}</Badge>}
            </TaskButton>
          ))}
        </TaskGroup>
        <Tray>
          <IconButton $w={66} aria-label="Show hidden icons"><Line w={14} h={8} vb="0 0 14 8" sw={2}><path d="M1 7l6-6 6 6" /></Line></IconButton>
          <TrayText $align="center" $gap={22}>ENG<br />IN</TrayText>
          <TrayIcons aria-label="Network, volume and battery">
            <Line w={20} h={16} vb="0 0 20 16" sw={1.6}><path d="M1 6c5-6 13-6 18 0M3.500 8.700c4-4.500 9-4.500 13 0M6.200 11.300c2.300-2.600 5.300-2.600 7.600 0" /><circle cx="10" cy="13.500" r="1.300" fill="#fff" /></Line>
            <Line w={20} h={16} vb="0 0 20 16" sw={1.4}><path d="M1 5.500h3L8.500 2v12L4 10.500H1zM11 5.500c1.200 1.500 1.200 3.500 0 5M13.500 3.200c2.500 2.700 2.500 7 0 9.600M16 1c3.700 4 3.700 10 0 14" /></Line>
            <Line w={20} h={14} vb="0 0 20 14" sw={1.5}><rect x="1" y="1" width="16" height="12" rx="3" /><rect x="3.500" y="3.500" width="11" height="7" rx="1" fill="#fff" /><path d="M19.300 5.500v3" strokeWidth="2" /></Line>
          </TrayIcons>
          <TrayText $align="right" $gap={11}>20:22<br />14-09-2024</TrayText>
          <IconButton $w={16} aria-label="Notifications">
            <Art w={16} h={20} vb="0 0 16 20"><path d="M8 0.500c4 0 6.200 3 6.200 6.500V12l1.800 2.500v1H0v-1L1.800 12V7C1.800 3.500 4 .5 8 .5zM5 16.800h6c-.5 1.500-1.500 2.400-3 2.400s-2.500-.9-3-2.400z" fill="#99e6ff" /></Art>
          </IconButton>
          <IconButton $w={74} aria-label="Copilot preview"><CopilotMark pre /></IconButton>
        </Tray>
      </Taskbar>
    </Screen>
  );
}
